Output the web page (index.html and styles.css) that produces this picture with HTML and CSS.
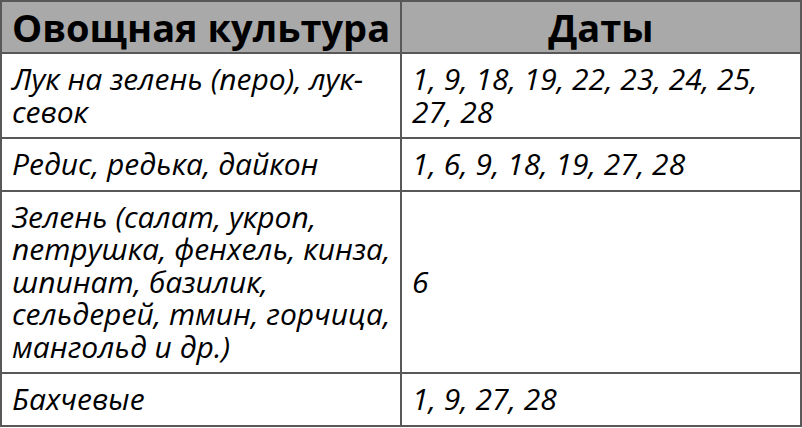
FILE: index.html
```html
<!DOCTYPE html>
<html lang="ru">
<head>
<meta charset="utf-8">
<link rel="stylesheet" href="styles.css">
</head>
<body>
<table class="sched">
  <thead>
    <tr><th>Овощная культура</th><th>Даты</th></tr>
  </thead>
  <tbody>
    <tr><td>Лук на зелень (перо), лук-севок</td><td>1, 9, 18, 19, 22, 23, 24, 25, 27, 28</td></tr>
    <tr><td>Редис, редька, дайкон</td><td>1, 6, 9, 18, 19, 27, 28</td></tr>
    <tr><td>Зелень (салат, укроп, петрушка, фенхель, кинза, шпинат, базилик, сельдерей, тмин, горчица, мангольд и др.)</td><td>6</td></tr>
    <tr><td>Бахчевые</td><td>1, 9, 27, 28</td></tr>
  </tbody>
</table>
</body>
</html>
```
FILE: styles.css
```css
html, body {
  margin: 0;
  padding: 0;
  background: #ffffff;
}
.sched {
  width: 802px;
  border-collapse: collapse;
  table-layout: fixed;
  font-family: "Open Sans", "Noto Sans", sans-serif;
  color: #000;
}
.sched th, .sched td {
  border: 2px solid #585858;
  width: 50%;
}
.sched th {
  background: #a9a9a9;
  font-size: 38px;
  font-weight: 700;
  line-height: 42px;
  padding: 4px 8px;
  text-align: center;
}
.sched td {
  font-size: 30px;
  font-style: italic;
  line-height: 32.5px;
  padding: 9px 6px 9px 10px;
  text-align: left;
  vertical-align: middle;
}
```
